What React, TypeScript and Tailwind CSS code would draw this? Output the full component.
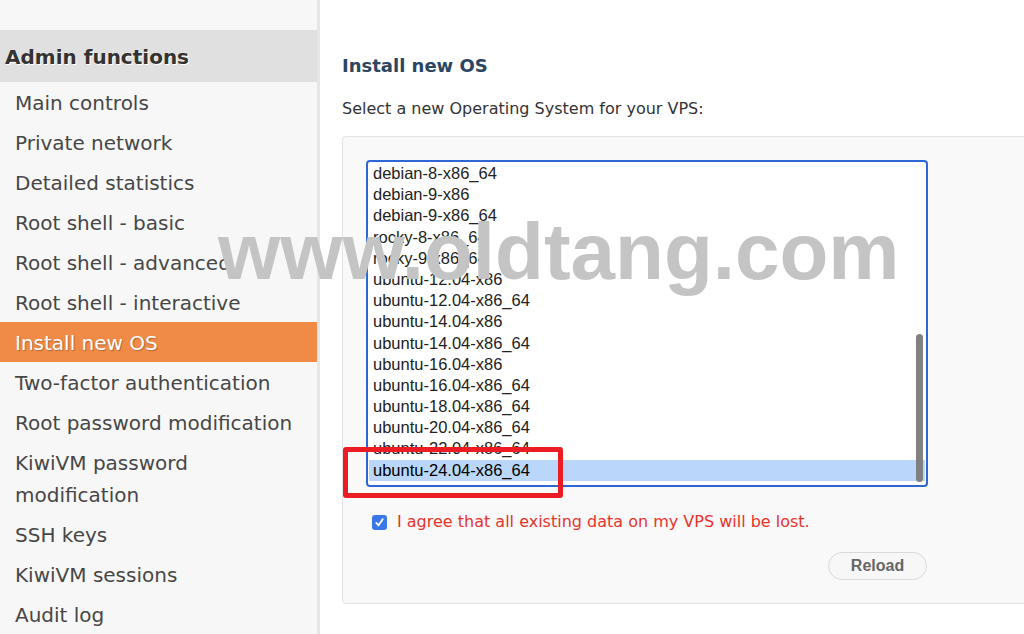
import React from "react";

const sideItems: { label: React.ReactNode; active?: boolean }[] = [
  { label: "Main controls" },
  { label: "Private network" },
  { label: "Detailed statistics" },
  { label: "Root shell - basic" },
  { label: "Root shell - advanced" },
  { label: "Root shell - interactive" },
  { label: "Install new OS", active: true },
  { label: "Two-factor authentication" },
  { label: "Root password modification" },
  { label: (<>KiwiVM password<br />modification</>) },
  { label: "SSH keys" },
  { label: "KiwiVM sessions" },
  { label: "Audit log" },
];

const osItems = [
  "debian-8-x86_64",
  "debian-9-x86",
  "debian-9-x86_64",
  "rocky-8-x86_64",
  "rocky-9-x86_64",
  "ubuntu-12.04-x86",
  "ubuntu-12.04-x86_64",
  "ubuntu-14.04-x86",
  "ubuntu-14.04-x86_64",
  "ubuntu-16.04-x86",
  "ubuntu-16.04-x86_64",
  "ubuntu-18.04-x86_64",
  "ubuntu-20.04-x86_64",
  "ubuntu-22.04-x86_64",
  "ubuntu-24.04-x86_64",
];

export default function App() {
  return (
    <div className="relative flex h-[634px] w-[1024px] overflow-hidden bg-white font-['DejaVu_Sans',sans-serif]">
      {/* Sidebar */}
      <aside className="w-[320px] shrink-0 border-r-[3px] border-[#e6e6e6] bg-[#f7f7f7] pt-[30px]">
        <div className="flex h-[52px] items-center bg-[#e0e0e0] pl-[5px] pt-[2px] text-[20px] font-bold text-[#333] [text-shadow:1px_1px_0_#fff]">
          Admin functions
        </div>
        <ul>
          {sideItems.map((it, i) => (
            <li
              key={i}
              className={
                it.active
                  ? "bg-[#ef8a47] pb-[3px] pl-[15px] pt-[5px] text-[20px] leading-[32px] text-white [text-shadow:1px_1px_1px_rgba(0,0,0,0.25)]"
                  : "pb-[3px] pl-[15px] pt-[5px] text-[20px] leading-[32px] text-[#474747]"
              }
            >
              {it.label}
            </li>
          ))}
        </ul>
      </aside>

      {/* Main */}
      <main className="min-w-0 flex-1 overflow-hidden pl-[22px] pt-[53px]">
        <h2 className="text-[18px] font-bold leading-[26px] text-[#2b4562]">Install new OS</h2>
        <p className="mt-[18px] text-[16px] leading-[24px] text-[#333]">
          Select a new Operating System for your VPS:
        </p>
        <div className="mt-[15px] w-[720px] rounded-[4px] border border-[#e3e3e3] bg-[#f9f9f9] pb-[23px] pl-[23px] pt-[23px]">
          <div className="relative h-[327px] w-[562px] overflow-hidden rounded-[4px] border-2 border-[#2e67d3] bg-white px-[1px] pt-[1px] font-['Liberation_Sans',Arial,sans-serif] text-[16.5px] text-[#222]">
            {osItems.map((o) => (
              <div
                key={o}
                className={
                  o === "ubuntu-24.04-x86_64"
                    ? "h-[21.2px] bg-[#bad6f8] pl-[4px] leading-[21.2px] text-black"
                    : "h-[21.2px] pl-[4px] leading-[21.2px]"
                }
              >
                {o}
              </div>
            ))}
            <div className="absolute right-[3px] top-[172px] h-[148px] w-[7px] rounded-full bg-[#7a7a7a]/95" />
          </div>

          <div className="mt-[26px] flex h-[18px] items-center">
            <div className="ml-[6px] flex h-[15px] w-[15px] items-center justify-center rounded-[3px] bg-[#3b78e7]">
              <svg width="11" height="11" viewBox="0 0 12 12" fill="none">
                <path d="M2.5 6.5 L5 9 L9.5 2.5" stroke="#fff" strokeWidth="2" strokeLinecap="round" strokeLinejoin="round" />
              </svg>
            </div>
            <span className="ml-[10px] text-[16px] leading-[18px] text-[#e8332d]">
              I agree that all existing data on my VPS will be lost.
            </span>
          </div>

          <div className="mt-[21px] flex w-[562px] justify-end">
            <button className="mr-[1px] h-[28px] w-[99px] rounded-full border border-[#dadada] bg-[#f7f7f7] font-['Liberation_Sans',Arial,sans-serif] text-[16px] font-bold text-[#666]">
              Reload
            </button>
          </div>
        </div>
      </main>

      {/* Annotation rectangle */}
      <div className="pointer-events-none absolute left-[343px] top-[447px] h-[51px] w-[220px] rounded-[3px] border-[5px] border-[#ec1c24]" />

      {/* Watermark */}
      <div className="pointer-events-none absolute left-[218px] top-[212px] whitespace-nowrap font-['Liberation_Sans',Arial,sans-serif] text-[80px] font-bold leading-[80px] text-[#c4c4c4]">
        www.oldtang.com
      </div>
    </div>
  );
}
